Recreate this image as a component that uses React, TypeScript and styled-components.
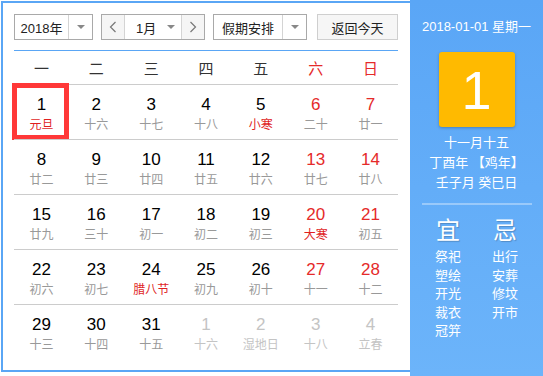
import React from 'react';
import styled, { createGlobalStyle } from 'styled-components';

const GlobalStyle = createGlobalStyle`
  html, body {
    margin: 0;
    padding: 0;
    background: #fff;
  }
  body {
    font-family: "Liberation Sans", "Noto Sans CJK SC", sans-serif;
  }
`;

interface Day {
  n: number;
  lunar: string;
  festival?: boolean;
  other?: boolean;
}

const days: Day[] = [
  { n: 1, lunar: '元旦', festival: true },
  { n: 2, lunar: '十六' },
  { n: 3, lunar: '十七' },
  { n: 4, lunar: '十八' },
  { n: 5, lunar: '小寒', festival: true },
  { n: 6, lunar: '二十' },
  { n: 7, lunar: '廿一' },
  { n: 8, lunar: '廿二' },
  { n: 9, lunar: '廿三' },
  { n: 10, lunar: '廿四' },
  { n: 11, lunar: '廿五' },
  { n: 12, lunar: '廿六' },
  { n: 13, lunar: '廿七' },
  { n: 14, lunar: '廿八' },
  { n: 15, lunar: '廿九' },
  { n: 16, lunar: '三十' },
  { n: 17, lunar: '初一' },
  { n: 18, lunar: '初二' },
  { n: 19, lunar: '初三' },
  { n: 20, lunar: '大寒', festival: true },
  { n: 21, lunar: '初五' },
  { n: 22, lunar: '初六' },
  { n: 23, lunar: '初七' },
  { n: 24, lunar: '腊八节', festival: true },
  { n: 25, lunar: '初九' },
  { n: 26, lunar: '初十' },
  { n: 27, lunar: '十一' },
  { n: 28, lunar: '十二' },
  { n: 29, lunar: '十三' },
  { n: 30, lunar: '十四' },
  { n: 31, lunar: '十五' },
  { n: 1, lunar: '十六', other: true },
  { n: 2, lunar: '湿地日', other: true },
  { n: 3, lunar: '十八', other: true },
  { n: 4, lunar: '立春', other: true },
];

const weekdays = ['一', '二', '三', '四', '五', '六', '日'];
const good = ['祭祀', '塑绘', '开光', '裁衣', '冠笄'];
const bad = ['出行', '安葬', '修坟', '开市'];

const Page = styled.div`
  display: flex;
  width: 543px;
  height: 376px;
  overflow: hidden;
`;

const Main = styled.div`
  flex-shrink: 0;
  width: 384px;
  height: 367px;
  margin: 1px 0 0 1px;
  border: 2px solid #5aa6f5;
  border-right: none;
  padding: 0 12px 0 11px;
  display: flex;
  flex-direction: column;
`;

const Toolbar = styled.div`
  display: flex;
  align-items: center;
  height: 26px;
  margin-top: 11px;
  padding-bottom: 10px;
  border-bottom: 1px solid #5aa6f5;
`;

const Select = styled.div<{ $w: number }>`
  display: flex;
  height: 26px;
  width: ${(p) => p.$w}px;
  box-sizing: border-box;
  border: 1px solid #a9a9a9;
  background: #fff;
  margin-right: 8px;
  font-size: 13px;
  color: #222;
`;

const SelectText = styled.div`
  flex: 1;
  display: flex;
  align-items: center;
  justify-content: center;
`;

const ArrowBox = styled.div`
  width: 23px;
  border-left: 1px solid #d4d4d4;
  display: flex;
  align-items: center;
  justify-content: center;
`;

const Caret = styled.span`
  width: 0;
  height: 0;
  border-left: 4px solid transparent;
  border-right: 4px solid transparent;
  border-top: 4px solid #888;
`;

const NavButton = styled.div<{ $side: 'left' | 'right' }>`
  width: 22px;
  background: #f5f5f5;
  display: flex;
  align-items: center;
  justify-content: center;
  border-${(p) => (p.$side === 'left' ? 'right' : 'left')}: 1px solid #d4d4d4;
`;

const MonthText = styled.div`
  flex: 1;
  display: flex;
  align-items: center;
  padding-left: 11px;
`;

const MonthCaret = styled.div`
  width: 20px;
  display: flex;
  align-items: center;
  justify-content: center;
`;

const TodayButton = styled.div`
  height: 26px;
  width: 81px;
  margin-left: 2px;
  box-sizing: border-box;
  border: 1px solid #cfcfcf;
  background: #f6f6f6;
  display: flex;
  align-items: center;
  justify-content: center;
  font-size: 13px;
  color: #222;
`;

const Grid = styled.div`
  display: grid;
  grid-template-columns: repeat(7, 1fr);
`;

const WeekHead = styled.div<{ $red?: boolean }>`
  height: 33px;
  display: flex;
  align-items: center;
  justify-content: center;
  font-size: 15px;
  color: ${(p) => (p.$red ? '#e52a2a' : '#333')};
`;

const Cell = styled.div`
  position: relative;
  height: 55px;
  border-top: 1px solid #cccccc;
  display: flex;
  flex-direction: column;
  align-items: center;
  padding-top: 10px;
  box-sizing: border-box;
`;

const DayNum = styled.div<{ $color: string }>`
  font-size: 17px;
  line-height: 20px;
  color: ${(p) => p.$color};
`;

const Lunar = styled.div<{ $color: string }>`
  font-size: 12px;
  line-height: 20px;
  color: ${(p) => p.$color};
`;

const Selected = styled.div`
  position: absolute;
  left: -2px;
  right: 0;
  top: -2px;
  bottom: -1px;
  border: 5px solid #ff3838;
`;

const Side = styled.div`
  flex-shrink: 0;
  width: 133px;
  height: 376px;
  background: linear-gradient(180deg, #5aa6f6 0%, #6cb4fa 100%);
  color: #fff;
  display: flex;
  flex-direction: column;
  align-items: center;
`;

const DateLine = styled.div`
  margin-top: 19px;
  font-size: 13px;
  line-height: 16px;
`;

const BigDay = styled.div`
  margin-top: 17px;
  width: 76px;
  height: 75px;
  border-radius: 3px;
  background: #ffba00;
  box-shadow: 0 1px 3px rgba(0, 0, 0, 0.25);
  display: flex;
  align-items: center;
  justify-content: center;
  font-size: 54px;
  line-height: 1;
`;

const LunarInfo = styled.div`
  margin-top: 6px;
  font-size: 13px;
  line-height: 20px;
  text-align: center;
  white-space: nowrap;
`;

const Divider = styled.div`
  margin-top: 10px;
  width: 110px;
  height: 2px;
  background: rgba(255, 255, 255, 0.35);
`;

const Columns = styled.div`
  display: flex;
  gap: 31px;
  margin-top: 13px;
`;

const Column = styled.div`
  display: flex;
  flex-direction: column;
  align-items: center;
  width: 26px;
`;

const Big = styled.div`
  font-size: 24px;
  line-height: 26px;
  text-shadow: 1px 1px 1px rgba(0, 0, 0, 0.2);
  margin-bottom: 4px;
`;

const Item = styled.div`
  font-size: 13px;
  line-height: 18.5px;
  white-space: nowrap;
`;

const Chevron = ({ dir }: { dir: 'left' | 'right' }) => (
  <svg width="8" height="12" viewBox="0 0 8 12">
    <path
      d={dir === 'left' ? 'M6.5 1 L1.5 6 L6.5 11' : 'M1.5 1 L6.5 6 L1.5 11'}
      fill="none"
      stroke="#777"
      strokeWidth="1.2"
    />
  </svg>
);

const App = (): React.ReactElement => {
  const cells = days.map((d, i) => {
    const col = i % 7;
    const weekend = col >= 5;
    let numColor = weekend ? '#e52a2a' : '#000';
    let lunarColor = d.festival ? '#e01f1f' : '#999';
    if (d.other) {
      numColor = '#c4c4c4';
      lunarColor = '#c4c4c4';
    }
    return (
      <Cell key={i}>
        <DayNum $color={numColor}>{d.n}</DayNum>
        <Lunar $color={lunarColor}>{d.lunar}</Lunar>
        {i === 0 && <Selected />}
      </Cell>
    );
  });

  return (
    <>
      <GlobalStyle />
      <Page>
        <Main>
          <Toolbar>
            <Select $w={79}>
              <SelectText>2018年</SelectText>
              <ArrowBox><Caret /></ArrowBox>
            </Select>
            <Select $w={104}>
              <NavButton $side="left"><Chevron dir="left" /></NavButton>
              <MonthText>1月</MonthText>
              <MonthCaret><Caret /></MonthCaret>
              <NavButton $side="right"><Chevron dir="right" /></NavButton>
            </Select>
            <Select $w={94}>
              <SelectText>假期安排</SelectText>
              <ArrowBox><Caret /></ArrowBox>
            </Select>
            <TodayButton>返回今天</TodayButton>
          </Toolbar>
          <Grid>
            {weekdays.map((w, i) => (
              <WeekHead key={w} $red={i >= 5}>{w}</WeekHead>
            ))}
            {cells}
          </Grid>
        </Main>
        <Side>
          <DateLine>2018-01-01 星期一</DateLine>
          <BigDay>1</BigDay>
          <LunarInfo>
            <div>十一月十五</div>
            <div>丁酉年 【鸡年】</div>
            <div>壬子月 癸巳日</div>
          </LunarInfo>
          <Divider />
          <Columns>
            <Column>
              <Big>宜</Big>
              {good.map((g) => <Item key={g}>{g}</Item>)}
            </Column>
            <Column>
              <Big>忌</Big>
              {bad.map((b) => <Item key={b}>{b}</Item>)}
            </Column>
          </Columns>
        </Side>
      </Page>
    </>
  );
};

export default App;
